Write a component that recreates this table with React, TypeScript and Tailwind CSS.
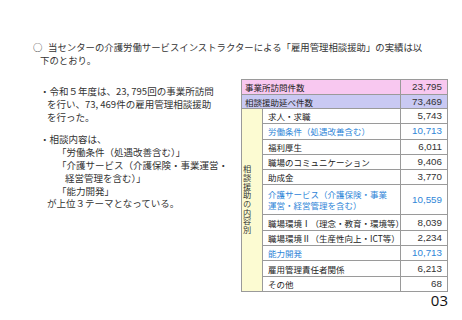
const jp = "font-['Noto_Sans_CJK_JP','Noto_Sans',sans-serif]";

interface Row {
  label: string;
  value: string;
  blue?: boolean;
  tall?: boolean;
}

const rows: Row[] = [
  { label: '求人・求職', value: '5,743' },
  { label: '労働条件（処遇改善含む）', value: '10,713', blue: true },
  { label: '福利厚生', value: '6,011' },
  { label: '職場のコミュニケーション', value: '9,406' },
  { label: '助成金', value: '3,770' },
  { label: '介護サービス（介護保険・事業運営・経営管理を含む）', value: '10,559', blue: true, tall: true },
  { label: '職場環境Ⅰ（理念・教育・環境等）', value: '8,039' },
  { label: '職場環境Ⅱ（生産性向上・ICT等）', value: '2,234' },
  { label: '能力開発', value: '10,713', blue: true },
  { label: '雇用管理責任者関係', value: '6,213' },
  { label: 'その他', value: '68' },
];

const cell = 'border border-[#9a9a9a]';
const num = "font-['Liberation_Sans',sans-serif] text-[9.8px] text-right pr-[5px] text-[#333]";

export default function App() {
  return (
    <div className={`w-[462px] h-[320px] bg-white text-[#222] ${jp} flex flex-col`}>
      {/* heading */}
      <div className="pt-[41px] pl-[33px] text-[9.4px] leading-[13px] text-[#333] whitespace-nowrap">
        <div className="flex">
          <span className="w-[15px]">○</span>
          <span>当センターの介護労働サービスインストラクターによる「雇用管理相談援助」の実績は以</span>
        </div>
        <div className="pl-[7px]">下のとおり。</div>
      </div>

      <div className="flex mt-[12px]">
        {/* left notes */}
        <div className="w-[241px] shrink-0 pl-[40px] pt-[6px] text-[9.5px] leading-[12.8px] text-[#333] whitespace-nowrap">
          <div>・令和５年度は、23, 795回の事業所訪問</div>
          <div className="pl-[7px]">を行い、73, 469件の雇用管理相談援助</div>
          <div className="pl-[7px]">を行った。</div>
          <div className="mt-[10px]">・相談内容は、</div>
          <div className="pl-[17px]">「労働条件（処遇改善含む）」</div>
          <div className="pl-[17px]">「介護サービス（介護保険・事業運営・</div>
          <div className="pl-[25px]">経営管理を含む）」</div>
          <div className="pl-[17px]">「能力開発」</div>
          <div className="pl-[7px]">が上位３テーマとなっている。</div>
        </div>

        {/* table */}
        <table className="w-[207px] border-collapse text-[8.5px] leading-[10px] text-[#222]">
          <colgroup>
            <col className="w-[21px]" />
            <col className="w-[139px]" />
            <col className="w-[47px]" />
          </colgroup>
          <tbody>
            <tr className="h-[15px] bg-[#f8c8f0]">
              <td colSpan={2} className={`${cell} pl-[3px]`}>事業所訪問件数</td>
              <td className={`${cell} ${num}`}>23,795</td>
            </tr>
            <tr className="h-[14px] bg-[#c9c9f3]">
              <td colSpan={2} className={`${cell} pl-[3px]`}>相談援助延べ件数</td>
              <td className={`${cell} ${num}`}>73,469</td>
            </tr>
            {rows.map((r, i) => (
              <tr key={r.label} className={r.tall ? 'h-[30px]' : 'h-[15.3px]'}>
                {i === 0 && (
                  <td rowSpan={rows.length} className={`${cell} bg-[#fcfbd2] align-middle`}>
                    <div className="mx-auto [writing-mode:vertical-rl] text-[8.2px] leading-[9px] tracking-[0.5px] text-[#333]">
                      相談援助の内容別
                    </div>
                  </td>
                )}
                <td className={`${cell} pl-[5px] ${r.blue ? 'text-[#2f86d8]' : ''}`}>
                  {r.tall ? (
                    <div className="leading-[11px]">
                      <div>介護サービス（介護保険・事業</div>
                      <div>運営・経営管理を含む）</div>
                    </div>
                  ) : (
                    r.label
                  )}
                </td>
                <td className={`${cell} ${num} ${r.blue ? '!text-[#2f86d8]' : ''}`}>{r.value}</td>
              </tr>
            ))}
          </tbody>
        </table>
      </div>

      <div className="flex justify-end pr-[14px] -mt-[1px]">
        <span className="font-['Open_Sans',sans-serif] text-[15px] leading-[18px] text-[#111]">03</span>
      </div>
    </div>
  );
}
